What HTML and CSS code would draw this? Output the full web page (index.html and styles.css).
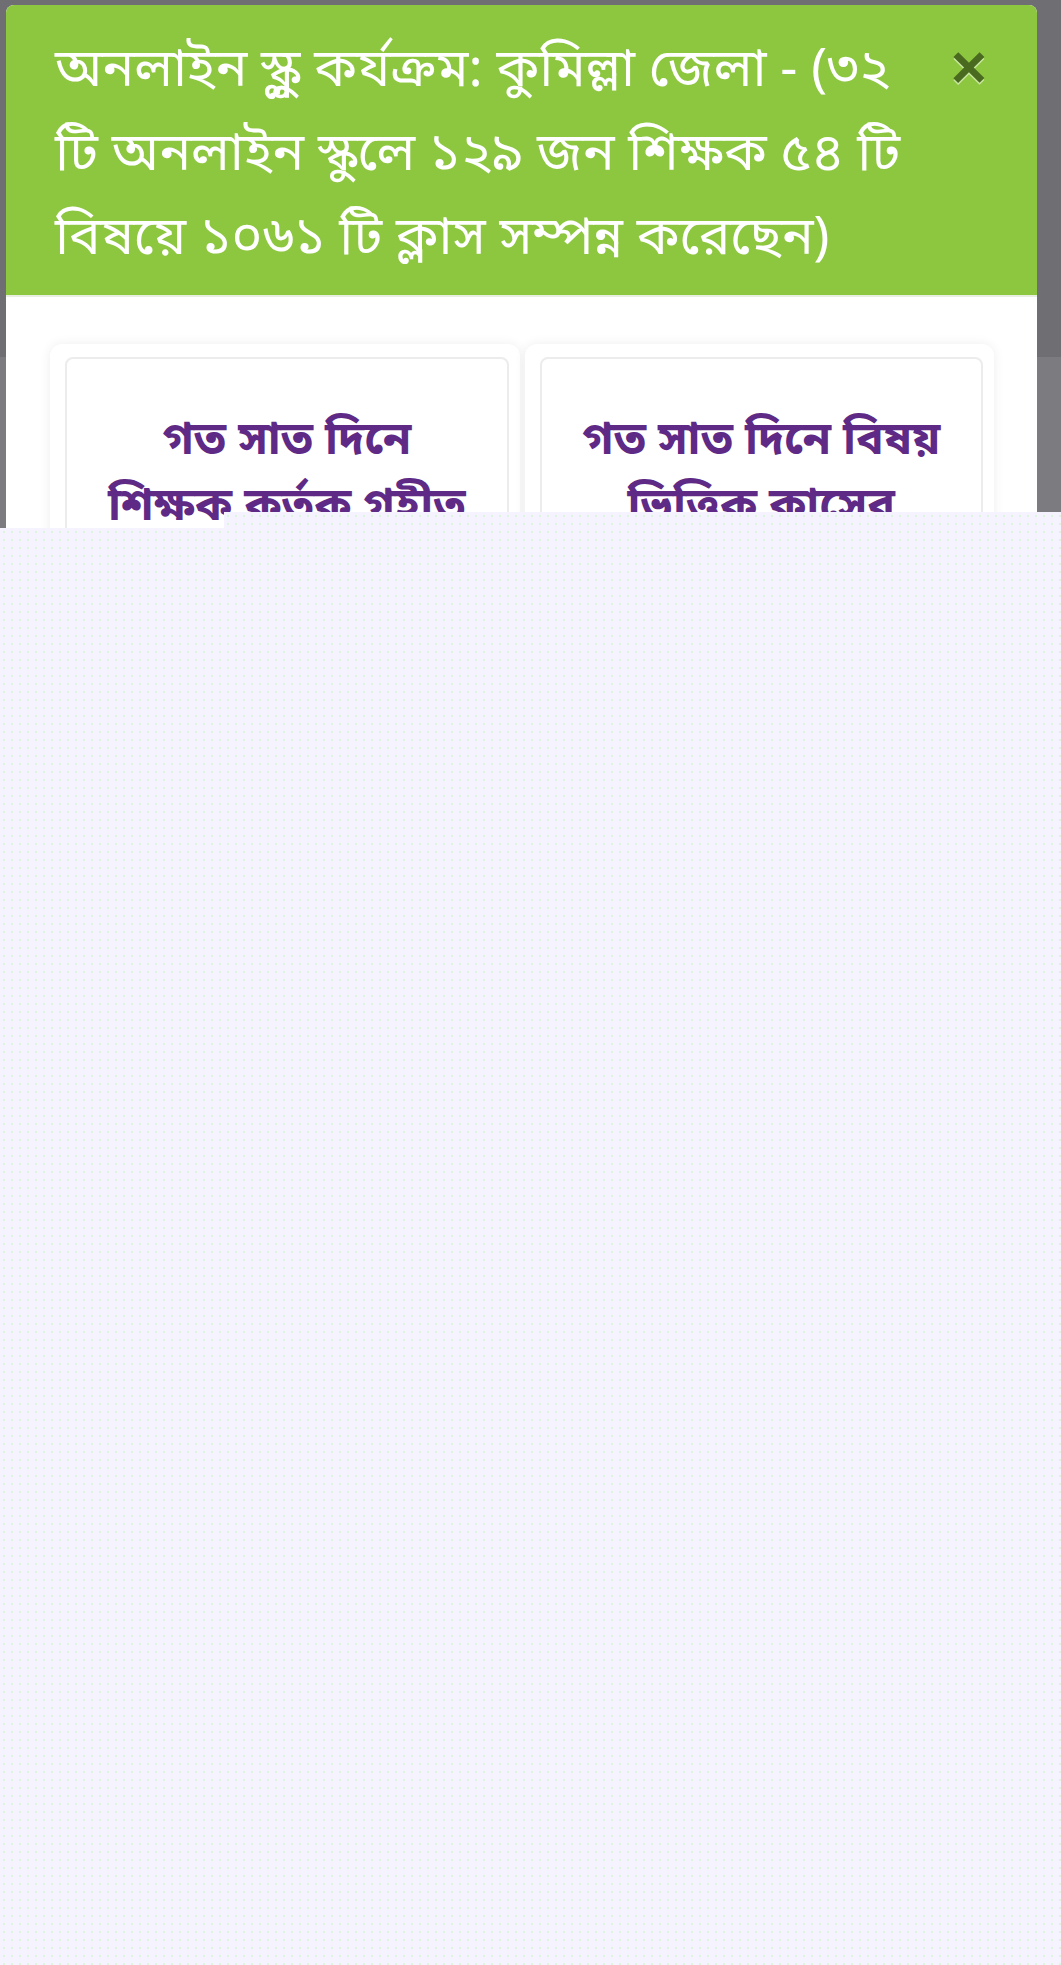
FILE: index.html
```html
<!DOCTYPE html>
<html>
<head>
    <title>অনলাইন স্কুল কর্যক্রম</title>
    <link rel="stylesheet" href="styles.css">
</head>
<body>
    <div class="backdrop">
        <div class="modal">
            <div class="modal-header">
                <h2 class="modal-title">অনলাইন স্কুল কর্যক্রম: কুমিল্লা জেলা - (৩২ টি অনলাইন স্কুলে ১২৯ জন শিক্ষক ৫৪ টি বিষয়ে ১০৬১ টি ক্লাস সম্পন্ন করেছেন)</h2>
                <span class="close">&times;</span>
            </div>
            <div class="modal-body">
                <div class="stat-box">
                    <div class="stat-card">
                        <h3>গত সাত দিনে<br>শিক্ষক কর্তৃক গৃহীত ক্লাসের সংখ্যা</h3>
                    </div>
                </div>
                <div class="stat-box">
                    <div class="stat-card">
                        <h3>গত সাত দিনে বিষয় ভিত্তিক ক্লাসের<br>সংখ্যা</h3>
                    </div>
                </div>
            </div>
        </div>
        <div class="unpainted"></div>
    </div>
</body>
</html>
```

FILE: styles.css
```css
* {
    box-sizing: border-box;
}
body {
    margin: 0;
    font-family: "Noto Sans Bengali", "Noto Serif Bengali", "Lohit Bengali", "FreeSerif", "Noto Sans", sans-serif;
    background-color: #f5f3fd;
    background-image: radial-gradient(circle, #dff3e0 0.9px, transparent 1.2px);
    background-size: 8px 8px;
    min-height: 1965px;
}
.backdrop {
    position: relative;
    height: 528px;
    overflow: hidden;
    background: linear-gradient(to bottom, #6f6f73 357px, #7b7b80 357px);
    padding: 5px 24px 0 6px;
}
.modal {
    background: #fff;
    border-radius: 8px;
    height: 600px;
    overflow: hidden;
}
.modal-header {
    display: flex;
    align-items: flex-start;
    background: #8dc63f;
    border-bottom: 2px solid #e8efe0;
    padding: 26px 50px 12px 49px;
}
.modal-title {
    flex: 1;
    margin: 0;
    color: #fff;
    font-size: 53px;
    font-weight: normal;
    line-height: 84px;
}
.close {
    color: #4a6a20;
    font-family: "Liberation Sans", Arial, sans-serif;
    font-size: 62px;
    font-weight: bold;
    line-height: 72px;
    text-shadow: 0 2px 0 #c9e6a0;
    padding-left: 30px;
}
.modal-body {
    display: flex;
    gap: 5px;
    padding: 47px 43px 0 44px;
}
.stat-box {
    flex: 1;
    background: #fff;
    border-radius: 12px;
    box-shadow: 0 0 12px rgba(0, 0, 0, 0.07);
    padding: 13px 11px 0 15px;
}
.stat-card {
    border: 2px solid #ececec;
    border-radius: 8px;
    padding: 51px 14px 0;
    height: 400px;
    text-align: center;
}
.stat-card h3 {
    margin: 0;
    color: #5e2a86;
    font-size: 46px;
    line-height: 66px;
}
.unpainted {
    position: absolute;
    top: 512px;
    left: 224px;
    right: 0;
    bottom: 0;
    background-color: #f5f3fd;
    background-image: radial-gradient(circle, #dff3e0 0.9px, transparent 1.2px);
    background-size: 8px 8px;
}
```
